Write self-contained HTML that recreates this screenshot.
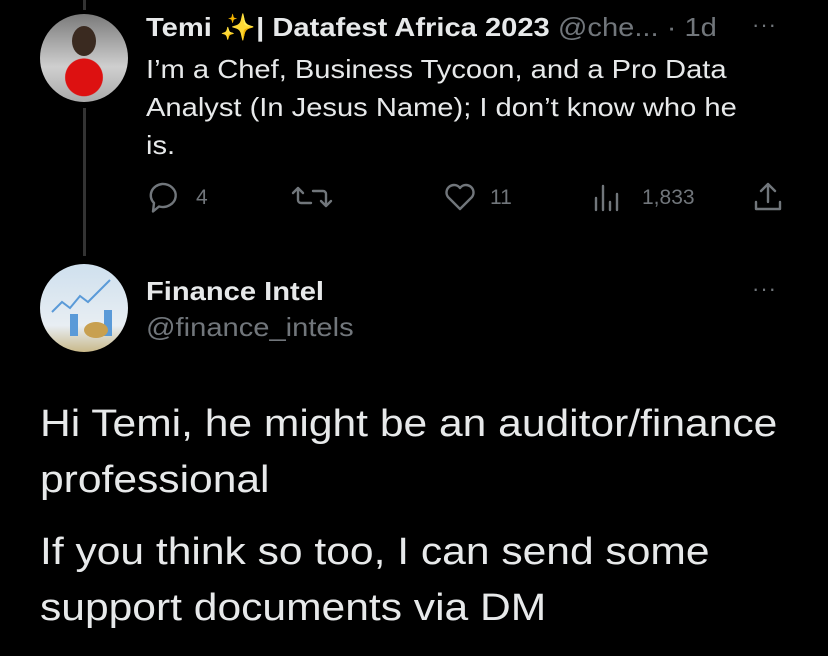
<!DOCTYPE html>
<html><head><meta charset="utf-8"><style>
body{margin:0;width:828px;height:656px;background:#000;overflow:hidden;font-family:"Liberation Sans",Helvetica,sans-serif;color:#e7e9ea;position:relative}
.a{position:absolute;white-space:nowrap;transform-origin:0 0}
.g{color:#71767b}
.s{transform:scaleX(1.12)}
</style></head><body>
<div class="a" style="left:83px;top:0;width:3px;height:10px;background:#333"></div>
<div class="a" style="left:83px;top:108px;width:3px;height:148px;background:#333"></div>
<div class="a" style="left:40px;top:14px;width:88px;height:88px;border-radius:50%;background:radial-gradient(circle at 50% 72%,#d11 0 24%,transparent 25%),linear-gradient(#7a7a7a,#cfcfcf 60%,#aaa)"></div>
<div class="a" style="left:72px;top:26px;width:24px;height:30px;border-radius:50%;background:#3a2a20"></div>
<div class="a s" style="left:146px;top:12px;font-size:26px;font-weight:bold">Temi <span style="color:#f5c518;font-weight:normal">✨</span>| Datafest Africa 2023 <span class="g" style="font-weight:normal">@che... · 1d</span></div>
<div class="a g" style="left:752px;top:12px;font-size:22px;letter-spacing:1px">···</div>
<div class="a s" style="left:146px;top:50px;font-size:26px;line-height:38px">I’m a Chef, Business Tycoon, and a Pro Data<br>Analyst (In Jesus Name); I don’t know who he<br>is.</div>
<svg class="a" style="left:146px;top:180px" width="640" height="34" fill="none" stroke="#71767b" stroke-width="2.4" stroke-linecap="round" stroke-linejoin="round">
<path d="M16 4a13 11.5 0 1 1 -3 22.5l-6 5 1-8.5a13 11.5 0 0 1 8-19z"/>
<text x="50" y="24" fill="#71767b" stroke="none" font-size="21" font-family="Liberation Sans">4</text>
<path d="M152 8v12a3 3 0 0 0 3 3h10M147 13l5-5 5 5M180 26v-12a3 3 0 0 0-3-3h-10M175 21l5 5 5-5"/>
<path d="M314 29l-12-12a7 7 0 0 1 12-9a7 7 0 0 1 12 9z"/>
<text x="344" y="24" fill="#71767b" stroke="none" font-size="21" font-family="Liberation Sans">11</text>
<path d="M450 18v12M457 6v24M464 22v8M471 14v16"/>
<text x="496" y="24" fill="#71767b" stroke="none" font-size="21" font-family="Liberation Sans">1,833</text>
<path d="M622 4v18M615 11l7-7 7 7M610 22v7h24v-7"/>
</svg>
<div class="a" style="left:40px;top:264px;width:88px;height:88px;border-radius:50%;background:linear-gradient(#cfe0ee,#e8eef3 70%,#c9b98a)"></div>
<svg class="a" style="left:40px;top:264px" width="88" height="88"><path d="M12 48l10-10 8 6 10-12 8 6 10-10 12-12" stroke="#5a9ad8" stroke-width="2" fill="none"/><rect x="30" y="50" width="8" height="22" fill="#5a9ad8"/><rect x="64" y="46" width="8" height="26" fill="#5a9ad8"/><ellipse cx="56" cy="66" rx="12" ry="8" fill="#c8a050"/></svg>
<div class="a s" style="left:146px;top:276px;font-size:26px;font-weight:bold">Finance Intel</div>
<div class="a g s" style="left:146px;top:312px;font-size:26px">@finance_intels</div>
<div class="a g" style="left:752px;top:276px;font-size:22px;letter-spacing:1px">···</div>
<div class="a s" style="left:40px;top:396px;font-size:38px;line-height:56px">Hi Temi, he might be an auditor/finance<br>professional</div>
<div class="a s" style="left:40px;top:524px;font-size:38px;line-height:56px">If you think so too, I can send some<br>support documents via DM</div>
</body></html>
